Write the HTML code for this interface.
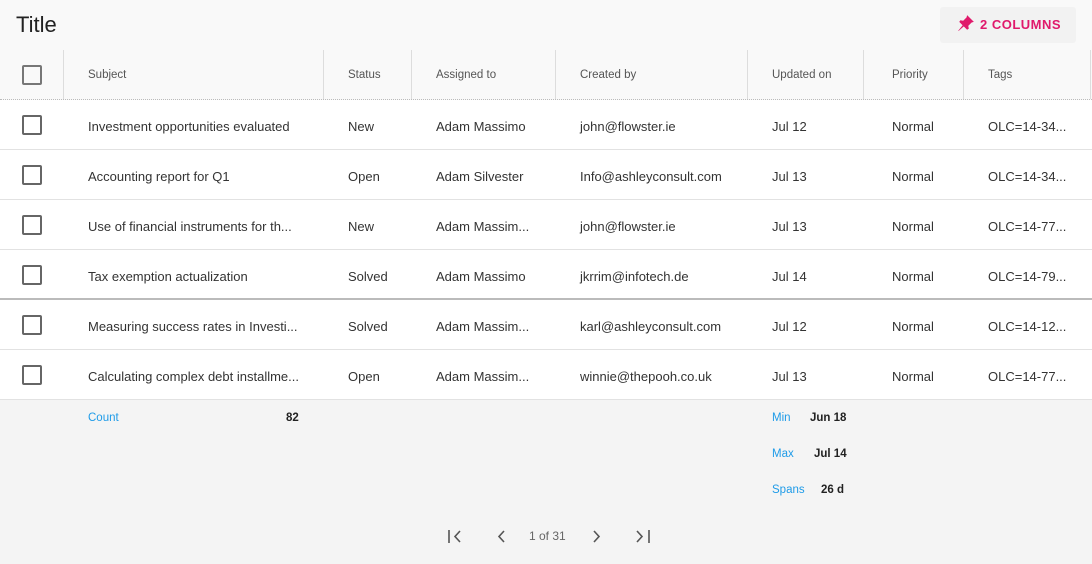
<!DOCTYPE html>
<html><head><meta charset="utf-8"><style>
*{box-sizing:border-box;margin:0;padding:0}
body{width:1092px;height:564px;overflow:hidden;background:#f9f9f9;font-family:"Liberation Sans",sans-serif;color:#333;font-size:13px;position:relative}
.title{position:absolute;left:16px;top:12px;font-size:22px;color:#222}
.btn{position:absolute;left:940px;top:7px;width:136px;height:36px;background:#f2f2f2;border-radius:3px;color:#e0196b;font-size:13px;font-weight:bold;letter-spacing:.5px;line-height:36px;padding-left:17px}
.btn svg{vertical-align:-3px;margin-right:5px}
.row{position:absolute;left:0;width:1092px;height:50px;background:#fff;border-bottom:1px solid #e2e2e2}
.hdr{top:50px;background:#f9f9f9;border-bottom:1px dotted #bbb;font-size:11.5px;color:#555}
.c{position:absolute;top:2px;height:49px;line-height:49px;white-space:nowrap}
.hdr .c{border-left:1px solid #ddd;height:49px;top:0;line-height:51px}
.cb{position:absolute;left:22px;top:15px;width:20px;height:20px;border:2px solid #666;border-radius:2px}
.foot{position:absolute;left:0;top:400px;width:1092px;height:164px;background:#f4f4f4;font-size:11.5px}
.k{position:absolute;color:#1e9be8}
.v{position:absolute;color:#222;font-weight:bold}
.pg{position:absolute;top:529px;font-size:12px;color:#666}
</style></head><body>
<div class="title">Title</div>
<div class="btn"><svg width="18" height="18" viewBox="0 0 16 16"><path d="M9 1 L15 7 L13 7.5 L10 10.5 L10.5 13 L9 14 L2 7 L3 5.5 L5.5 6 L8.5 3 Z M5 10 L1 15 L1.5 15 L6 11 Z" fill="#e0196b"/></svg>2 COLUMNS</div>

<div class="row hdr">
<div class="cb" style="border-color:#777"></div>
<div class="c" style="left:63px;padding-left:24px;width:260px">Subject</div>
<div class="c" style="left:323px;padding-left:24px;width:88px">Status</div>
<div class="c" style="left:411px;padding-left:24px;width:144px">Assigned to</div>
<div class="c" style="left:555px;padding-left:24px;width:192px">Created by</div>
<div class="c" style="left:747px;padding-left:24px;width:116px">Updated on</div>
<div class="c" style="left:863px;padding-left:28px;width:100px">Priority</div>
<div class="c" style="left:963px;padding-left:24px;width:128px;border-right:1px solid #ddd">Tags</div>
</div>

<div class="row" style="top:100px"><div class="cb"></div><div class="c" style="left:88px">Investment opportunities evaluated</div><div class="c" style="left:348px">New</div><div class="c" style="left:436px">Adam Massimo</div><div class="c" style="left:580px">john@flowster.ie</div><div class="c" style="left:772px">Jul 12</div><div class="c" style="left:892px">Normal</div><div class="c" style="left:988px">OLC=14-34...</div></div>
<div class="row" style="top:150px"><div class="cb"></div><div class="c" style="left:88px">Accounting report for Q1</div><div class="c" style="left:348px">Open</div><div class="c" style="left:436px">Adam Silvester</div><div class="c" style="left:580px">Info@ashleyconsult.com</div><div class="c" style="left:772px">Jul 13</div><div class="c" style="left:892px">Normal</div><div class="c" style="left:988px">OLC=14-34...</div></div>
<div class="row" style="top:200px"><div class="cb"></div><div class="c" style="left:88px">Use of financial instruments for th...</div><div class="c" style="left:348px">New</div><div class="c" style="left:436px">Adam Massim...</div><div class="c" style="left:580px">john@flowster.ie</div><div class="c" style="left:772px">Jul 13</div><div class="c" style="left:892px">Normal</div><div class="c" style="left:988px">OLC=14-77...</div></div>
<div class="row" style="top:250px;border-bottom:2px solid #bbb"><div class="cb"></div><div class="c" style="left:88px">Tax exemption actualization</div><div class="c" style="left:348px">Solved</div><div class="c" style="left:436px">Adam Massimo</div><div class="c" style="left:580px">jkrrim@infotech.de</div><div class="c" style="left:772px">Jul 14</div><div class="c" style="left:892px">Normal</div><div class="c" style="left:988px">OLC=14-79...</div></div>
<div class="row" style="top:300px"><div class="cb"></div><div class="c" style="left:88px">Measuring success rates in Investi...</div><div class="c" style="left:348px">Solved</div><div class="c" style="left:436px">Adam Massim...</div><div class="c" style="left:580px">karl@ashleyconsult.com</div><div class="c" style="left:772px">Jul 12</div><div class="c" style="left:892px">Normal</div><div class="c" style="left:988px">OLC=14-12...</div></div>
<div class="row" style="top:350px"><div class="cb"></div><div class="c" style="left:88px">Calculating complex debt installme...</div><div class="c" style="left:348px">Open</div><div class="c" style="left:436px">Adam Massim...</div><div class="c" style="left:580px">winnie@thepooh.co.uk</div><div class="c" style="left:772px">Jul 13</div><div class="c" style="left:892px">Normal</div><div class="c" style="left:988px">OLC=14-77...</div></div>

<div class="foot">
<span class="k" style="left:88px;top:12px">Count</span><span class="v" style="left:286px;top:12px">82</span>
<span class="k" style="left:772px;top:12px">Min</span><span class="v" style="left:810px;top:12px">Jun 18</span>
<span class="k" style="left:772px;top:48px">Max</span><span class="v" style="left:814px;top:48px">Jul 14</span>
<span class="k" style="left:772px;top:84px">Spans</span><span class="v" style="left:821px;top:84px">26 d</span>
</div>
<svg style="position:absolute;left:446px;top:529px" width="220" height="16" viewBox="0 0 220 16">
<g stroke="#555" stroke-width="1.6" fill="none">
<path d="M3 1 V14 M14 2 L9 7.5 L14 13"/>
<path d="M58 2 L53 7.5 L58 13"/>
<path d="M148 2 L153 7.5 L148 13"/>
<path d="M191 2 L196 7.5 L191 13 M203 1 V14"/>
</g></svg>
<div class="pg" style="left:529px">1 of 31</div>
</body></html>
